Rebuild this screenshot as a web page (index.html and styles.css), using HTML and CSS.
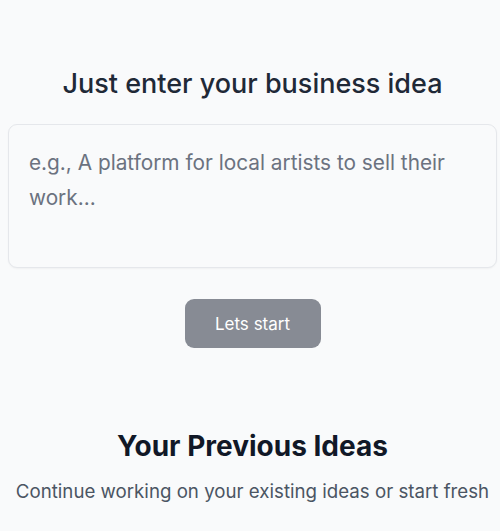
FILE: index.html
```html
<!DOCTYPE html>
<html>
<head>
<meta charset="utf-8">
<link rel="stylesheet" href="styles.css">
</head>
<body>
<main class="page">
  <section class="entry">
    <h1 class="entry-title">Just enter your business idea</h1>
    <textarea class="idea-input" placeholder="e.g., A platform for local artists to sell their work..."></textarea>
    <button class="start-btn" type="button">Lets start</button>
  </section>
  <section class="previous">
    <h2 class="previous-title">Your Previous Ideas</h2>
    <p class="previous-sub">Continue working on your existing ideas or start fresh</p>
  </section>
</main>
</body>
</html>
```

FILE: styles.css
```css
html, body {
  margin: 0;
  padding: 0;
  background: #f9fafb;
  font-family: Inter, "Noto Sans", sans-serif;
}
.page {
  width: 489px;
  margin-left: 8px;
  padding-top: 66px;
}
.entry {
  display: flex;
  flex-direction: column;
  align-items: center;
}
.entry-title {
  margin: 0;
  font-size: 27px;
  line-height: 36px;
  font-weight: 500;
  color: #1f2937;
}
.idea-input {
  box-sizing: border-box;
  margin-top: 22px;
  width: 489px;
  height: 144px;
  padding: 20px 20px;
  border: 1px solid #e5e7eb;
  border-radius: 9px;
  background: #f9fafb;
  font-family: inherit;
  font-size: 20.8px;
  line-height: 35px;
  color: #111827;
  resize: none;
  box-shadow: 0 1px 2px rgba(0,0,0,0.04);
  outline: none;
}
.idea-input::placeholder {
  color: #6b7280;
}
.start-btn {
  margin-top: 31px;
  width: 136px;
  height: 49px;
  border: none;
  border-radius: 9px;
  background: #878b94;
  color: #ffffff;
  font-family: inherit;
  font-size: 17px;
  font-weight: 400;
}
.previous {
  margin-top: 80px;
  text-align: center;
}
.previous-title {
  margin: 0;
  font-size: 28px;
  line-height: 36px;
  font-weight: 700;
  color: #111827;
}
.previous-sub {
  margin: 15px 0 0;
  font-size: 18.7px;
  line-height: 26px;
  color: #4b5563;
}
```
